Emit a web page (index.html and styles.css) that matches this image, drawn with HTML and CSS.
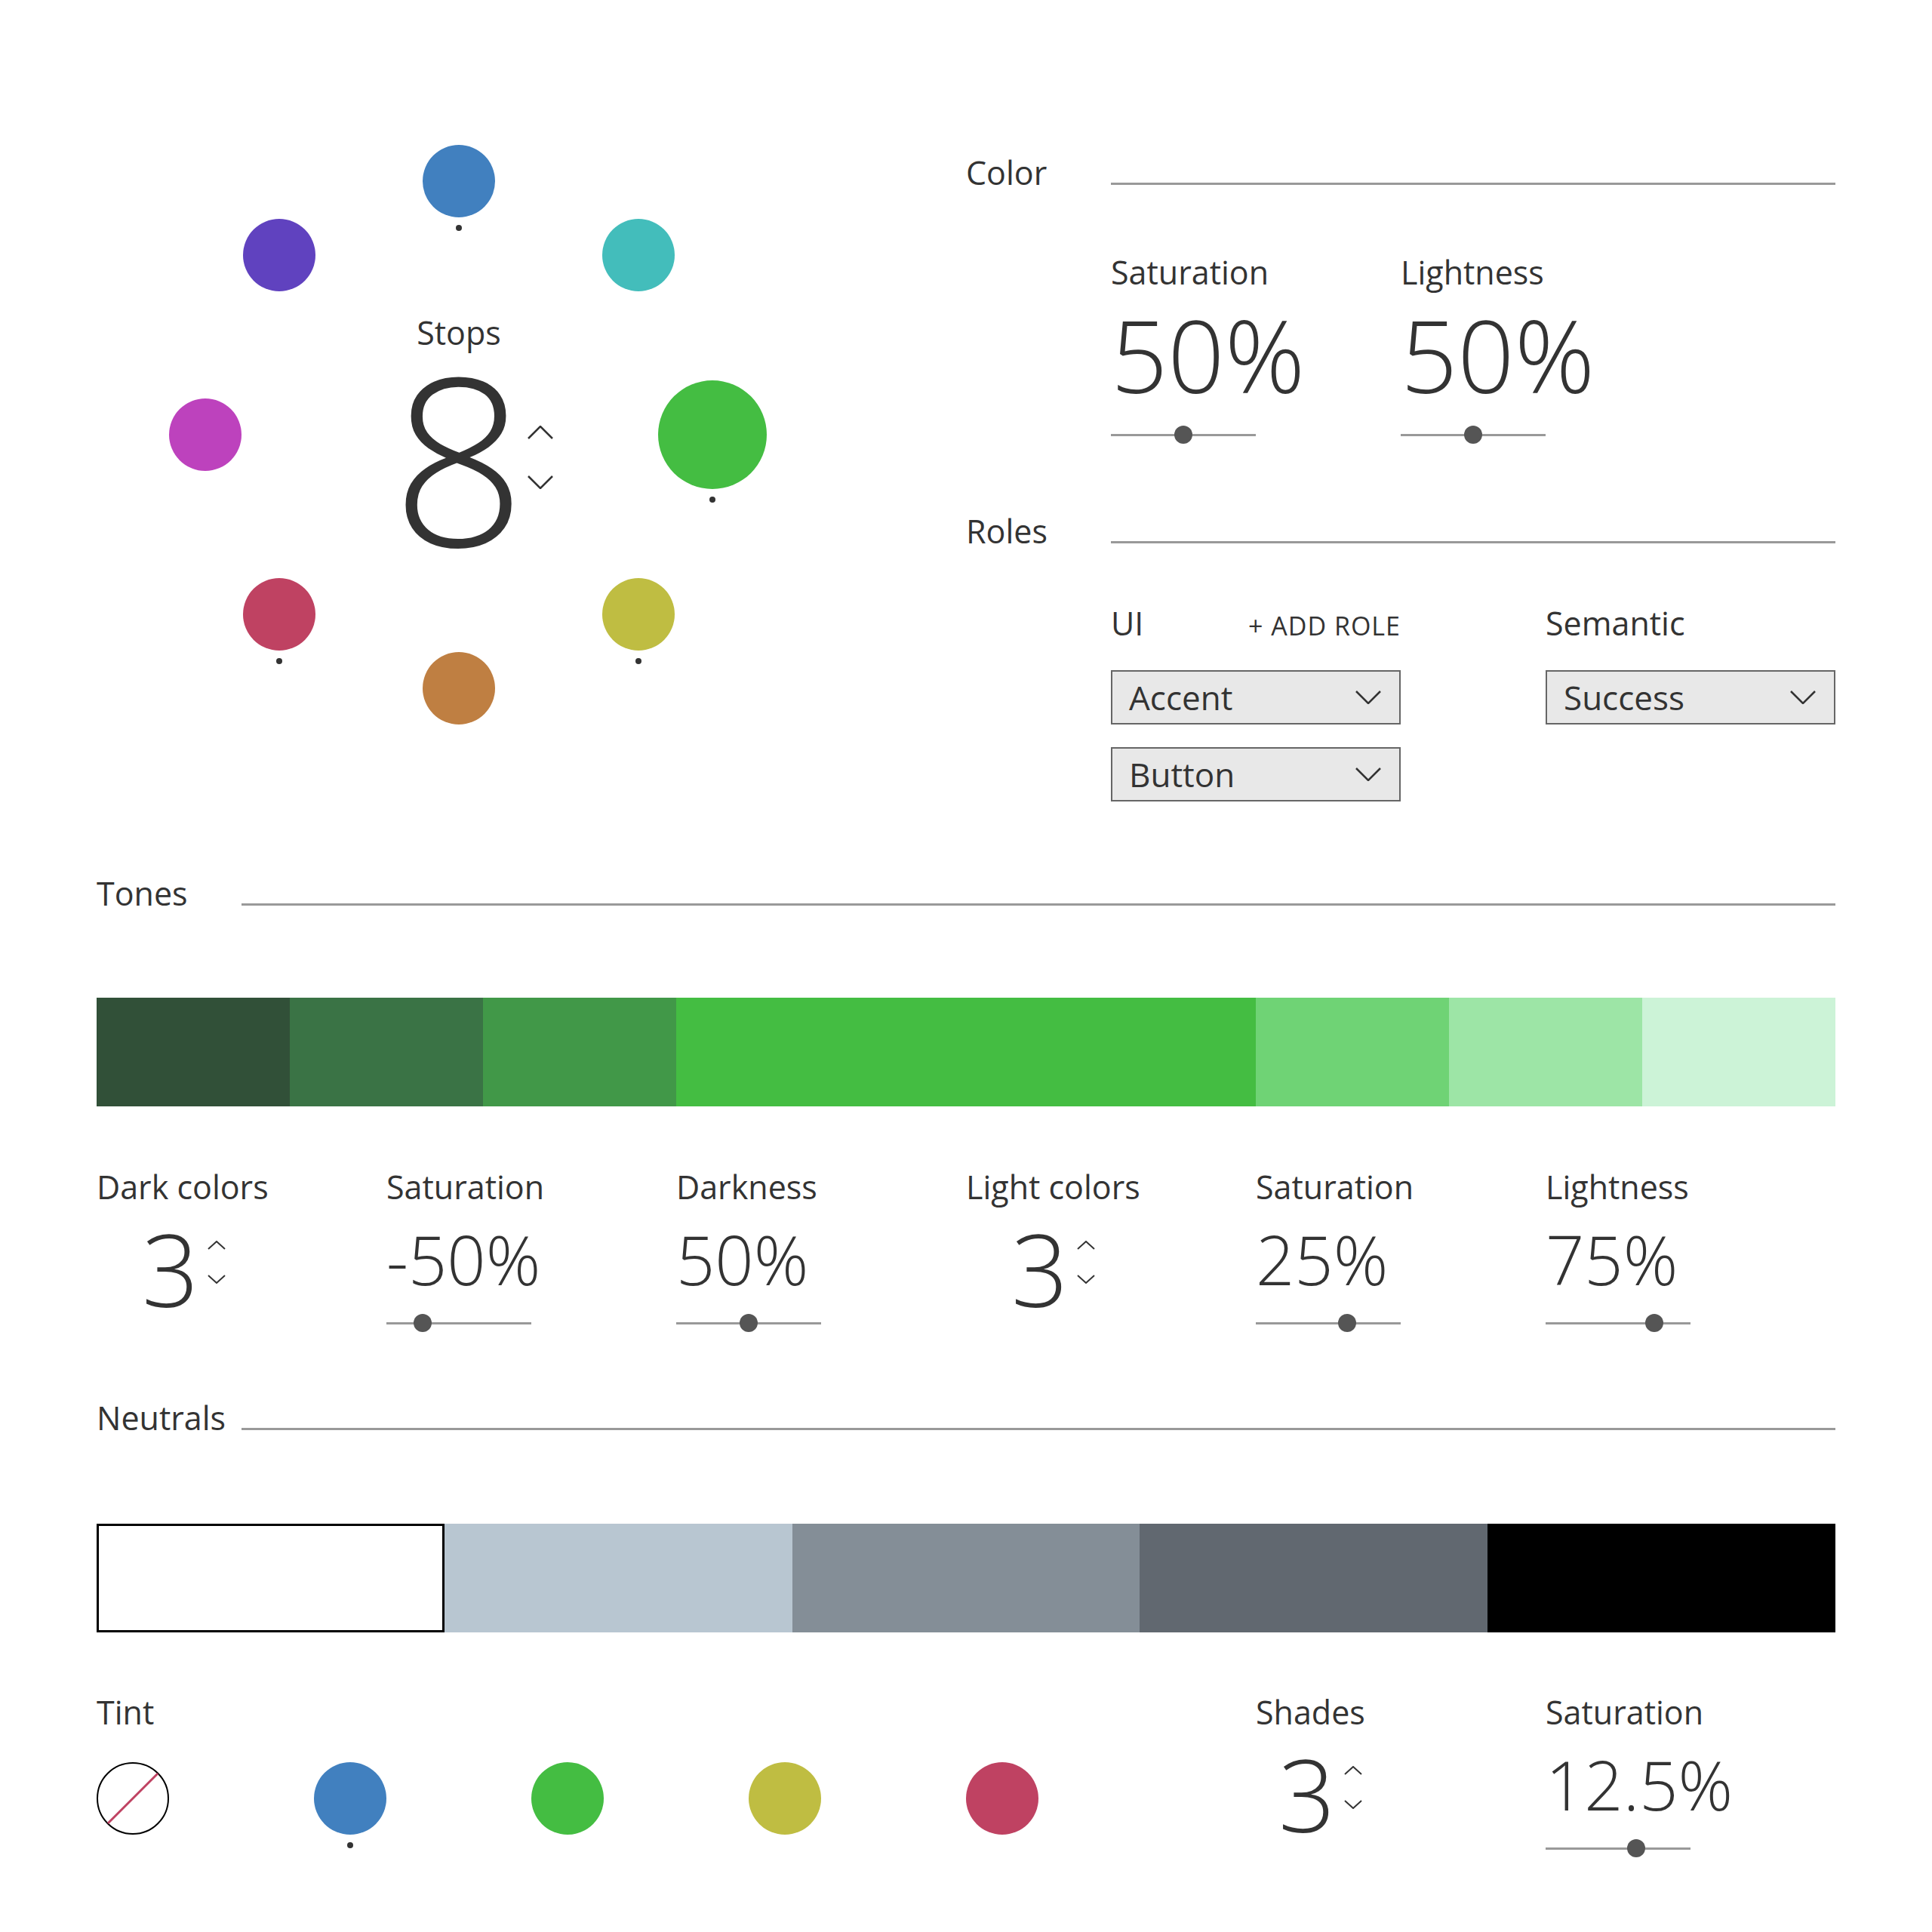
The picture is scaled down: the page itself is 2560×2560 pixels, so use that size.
FILE: index.html
```html
<!DOCTYPE html>
<html lang="en">
<head>
<meta charset="utf-8">
<title>Palette</title>
<link rel="stylesheet" href="styles.css">
</head>
<body>
<main class="page">
  <section class="top">
    <div class="wheel">
      <span class="stop stop-n c-blue marked"></span>
      <span class="stop stop-ne c-teal"></span>
      <span class="stop stop-e c-green marked"></span>
      <span class="stop stop-se c-olive marked"></span>
      <span class="stop stop-s c-orange"></span>
      <span class="stop stop-sw c-red marked"></span>
      <span class="stop stop-w c-magenta"></span>
      <span class="stop stop-nw c-purple"></span>
      <div class="stops">
        <span class="label">Stops</span>
        <span class="stops-num">8
          <span class="stops-chev">
            <svg width="34" height="18" viewBox="0 0 34 18"><polyline points="1,17 17,1 33,17"/></svg>
            <svg width="34" height="18" viewBox="0 0 34 18"><polyline points="1,1 17,17 33,1"/></svg>
          </span>
        </span>
      </div>
    </div>

    <div class="panel">
      <div class="heading panel-heading"><span class="label">Color</span><span class="rule"></span></div>
      <div class="color-body">
        <div class="field">
          <span class="label">Saturation</span>
          <div class="big-value">50%</div>
          <div class="slider" style="--v:50%"></div>
        </div>
        <div class="field">
          <span class="label">Lightness</span>
          <div class="big-value">50%</div>
          <div class="slider" style="--v:50%"></div>
        </div>
      </div>

      <div class="heading roles-heading"><span class="label">Roles</span><span class="rule"></span></div>
      <div class="roles">
        <div class="role-group">
          <div class="role-head"><span class="label">UI</span><span class="add-role">+ ADD ROLE</span></div>
          <div class="select"><span>Accent</span><svg width="34" height="18" viewBox="0 0 34 18"><polyline points="1,1 17,17 33,1"/></svg></div>
          <div class="select"><span>Button</span><svg width="34" height="18" viewBox="0 0 34 18"><polyline points="1,1 17,17 33,1"/></svg></div>
        </div>
        <div class="role-group">
          <div class="role-head"><span class="label">Semantic</span></div>
          <div class="select"><span>Success</span><svg width="34" height="18" viewBox="0 0 34 18"><polyline points="1,1 17,17 33,1"/></svg></div>
        </div>
      </div>
    </div>
  </section>

  <div class="heading tones-heading"><span class="label">Tones</span><span class="rule"></span></div>
  <div class="tone-bar">
    <span class="tone t-d1"></span>
    <span class="tone t-d2"></span>
    <span class="tone t-d3"></span>
    <span class="tone tone-main t-main"></span>
    <span class="tone t-l1"></span>
    <span class="tone t-l2"></span>
    <span class="tone t-l3"></span>
  </div>

  <div class="controls">
    <div class="field">
      <span class="label">Dark colors</span>
      <div class="value-area">
        <div class="stepper">
          <span class="stepper-num">3</span>
          <span class="chev">
            <svg width="24" height="12" viewBox="0 0 24 12"><polyline points="1,11 12,1 23,11"/></svg>
            <svg width="24" height="12" viewBox="0 0 24 12"><polyline points="1,1 12,11 23,1"/></svg>
          </span>
        </div>
      </div>
    </div>
    <div class="field">
      <span class="label">Saturation</span>
      <div class="value-area"><div class="value">-50%</div></div>
      <div class="slider" style="--v:25%"></div>
    </div>
    <div class="field">
      <span class="label">Darkness</span>
      <div class="value-area"><div class="value">50%</div></div>
      <div class="slider" style="--v:50%"></div>
    </div>
    <div class="field">
      <span class="label">Light colors</span>
      <div class="value-area">
        <div class="stepper">
          <span class="stepper-num">3</span>
          <span class="chev">
            <svg width="24" height="12" viewBox="0 0 24 12"><polyline points="1,11 12,1 23,11"/></svg>
            <svg width="24" height="12" viewBox="0 0 24 12"><polyline points="1,1 12,11 23,1"/></svg>
          </span>
        </div>
      </div>
    </div>
    <div class="field">
      <span class="label">Saturation</span>
      <div class="value-area"><div class="value">25%</div></div>
      <div class="slider" style="--v:63%"></div>
    </div>
    <div class="field">
      <span class="label">Lightness</span>
      <div class="value-area"><div class="value">75%</div></div>
      <div class="slider" style="--v:75%"></div>
    </div>
  </div>

  <div class="heading neutrals-heading"><span class="label">Neutrals</span><span class="rule"></span></div>
  <div class="neutral-bar">
    <span class="neutral n-white"></span>
    <span class="neutral n-light"></span>
    <span class="neutral n-mid"></span>
    <span class="neutral n-dark"></span>
    <span class="neutral n-black"></span>
  </div>

  <div class="bottom">
    <div class="field">
      <span class="label">Tint</span>
      <div class="value-area">
        <div class="tints">
          <span class="tint tint-none">
            <svg width="96" height="96" viewBox="0 0 96 96"><circle cx="48" cy="48" r="47"/><line x1="15" y1="81" x2="81" y2="15"/></svg>
          </span>
          <span class="tint c-blue marked"></span>
          <span class="tint c-green"></span>
          <span class="tint c-olive"></span>
          <span class="tint c-red"></span>
        </div>
      </div>
    </div>
    <div class="field">
      <span class="label">Shades</span>
      <div class="value-area">
        <div class="stepper stepper-shades">
          <span class="stepper-num">3</span>
          <span class="chev">
            <svg width="24" height="12" viewBox="0 0 24 12"><polyline points="1,11 12,1 23,11"/></svg>
            <svg width="24" height="12" viewBox="0 0 24 12"><polyline points="1,1 12,11 23,1"/></svg>
          </span>
        </div>
      </div>
    </div>
    <div class="field">
      <span class="label">Saturation</span>
      <div class="value-area"><div class="value">12.5%</div></div>
      <div class="slider" style="--v:62.5%"></div>
    </div>
  </div>
</main>
</body>
</html>
```

FILE: styles.css
```css
* {
  box-sizing: border-box;
  margin: 0;
  padding: 0;
}

html,
body {
  background: #fff;
}

body {
  width: 2560px;
  height: 2560px;
  overflow: hidden;
  font-family: "Open Sans", "Liberation Sans", sans-serif;
  color: #333;
}

.page {
  padding: 0 128px;
}

.label {
  display: block;
  font-size: 43px;
  line-height: 43px;
  font-weight: 400;
  white-space: nowrap;
}

/* section headings with rule */
.heading {
  display: grid;
  grid-template-columns: 192px 1fr;
  align-items: start;
}

.rule {
  height: 3px;
  margin-top: 35px;
  background: #999;
}

/* top area */
.top {
  display: grid;
  grid-template-columns: 1152px 1152px;
  height: 1062px;
}

.wheel {
  position: relative;
  width: 960px;
  height: 960px;
  margin-top: 96px;
  padding-top: 323px;
  display: flex;
  flex-direction: column;
  align-items: center;
}

.stop {
  position: absolute;
  width: 96px;
  height: 96px;
  border-radius: 50%;
}

.stop-n { left: 432px; top: 96px; }
.stop-ne { left: 670px; top: 194px; }
.stop-e { left: 744px; top: 408px; width: 144px; height: 144px; }
.stop-se { left: 670px; top: 670px; }
.stop-s { left: 432px; top: 768px; }
.stop-sw { left: 194px; top: 670px; }
.stop-w { left: 96px; top: 432px; }
.stop-nw { left: 194px; top: 194px; }

.marked::after {
  content: "";
  position: absolute;
  left: 50%;
  top: calc(100% + 10px);
  width: 8px;
  height: 8px;
  margin-left: -4px;
  border-radius: 50%;
  background: #333;
}

.c-blue { background: #4180bf; }
.c-teal { background: #43bdbb; }
.c-green { background: #44bd42; }
.c-olive { background: #bfbd42; }
.c-orange { background: #bf7f42; }
.c-red { background: #bf4262; }
.c-magenta { background: #bd42bd; }
.c-purple { background: #6042bf; }

.stops {
  display: flex;
  flex-direction: column;
  align-items: center;
}

.stops-num {
  position: relative;
  display: block;
  margin-top: 22px;
  font-size: 310px;
  line-height: 240px;
  font-weight: 300;
}

.stops-chev {
  position: absolute;
  left: calc(100% + 3px);
  top: 80px;
  display: flex;
  flex-direction: column;
  gap: 48px;
}

svg polyline,
svg line {
  fill: none;
  stroke: #333;
  stroke-width: 2.5;
}

/* right panel */
.panel-heading {
  margin-top: 207px;
}

.color-body {
  display: grid;
  grid-template-columns: 384px 384px;
  margin: 89px 0 0 192px;
}

.big-value {
  margin-top: 22px;
  font-size: 132px;
  line-height: 132px;
  font-weight: 300;
  white-space: nowrap;
}

.color-body .slider {
  margin-top: 28px;
}

.slider {
  position: relative;
  width: 192px;
  height: 24px;
}

.slider::before {
  content: "";
  position: absolute;
  left: 0;
  right: 0;
  top: 10.5px;
  height: 3px;
  background: #999;
}

.slider::after {
  content: "";
  position: absolute;
  top: 0;
  left: calc(var(--v) - 12px);
  width: 24px;
  height: 24px;
  border-radius: 50%;
  background: #555;
}

.roles-heading {
  margin-top: 94px;
}

.roles {
  display: grid;
  grid-template-columns: 384px 384px;
  column-gap: 192px;
  margin: 79px 0 0 192px;
}

.role-head {
  display: flex;
  justify-content: space-between;
  align-items: baseline;
  height: 43px;
}

.add-role {
  font-size: 34px;
  letter-spacing: 1px;
  white-space: nowrap;
}

.select {
  display: flex;
  align-items: center;
  justify-content: space-between;
  height: 72px;
  margin-top: 41px;
  padding: 0 24px 0 22px;
  border: 2px solid #666;
  background: #e8e8e8;
  font-size: 44px;
  line-height: 50px;
}

.select + .select {
  margin-top: 30px;
}

/* tones */
.tones-heading {
  margin-top: 100px;
}

.tone-bar {
  display: flex;
  height: 144px;
  margin-top: 117px;
}

.tone {
  width: 256px;
}

.tone-main {
  width: 768px;
}

.t-d1 { background: #315038; }
.t-d2 { background: #3a7345; }
.t-d3 { background: #419848; }
.t-main { background: #44bd42; }
.t-l1 { background: #6fd375; }
.t-l2 { background: #9de5a6; }
.t-l3 { background: #ccf3d7; }

.controls {
  display: grid;
  grid-template-columns: repeat(6, 384px);
  margin-top: 85px;
}

.value-area {
  display: flow-root;
  height: 118px;
  margin-top: 29px;
}

.value {
  font-size: 90px;
  line-height: 90px;
  font-weight: 300;
  white-space: nowrap;
}

.stepper {
  display: flex;
  align-items: flex-start;
  margin-top: -8px;
  padding-left: 60px;
}

.stepper-shades {
  padding-left: 30px;
}

.stepper-num {
  font-size: 132px;
  line-height: 132px;
  font-weight: 300;
}

.chev {
  display: flex;
  flex-direction: column;
  gap: 33px;
  margin-top: 29px;
  margin-left: 12px;
}

.chev svg polyline {
  stroke-width: 2;
}

/* neutrals */
.neutrals-heading {
  margin-top: 92px;
}

.neutral-bar {
  display: grid;
  grid-template-columns: repeat(5, 1fr);
  height: 144px;
  margin-top: 119px;
}

.n-white { background: #fff; border: 3px solid #000; }
.n-light { background: #b8c6d1; }
.n-mid { background: #848e97; }
.n-dark { background: #616870; }
.n-black { background: #000; }

/* bottom row */
.bottom {
  display: grid;
  grid-template-columns: 1536px 384px 384px;
  margin-top: 84px;
}

.tints {
  display: flex;
  gap: 192px;
  margin-top: 16px;
}

.tint {
  position: relative;
  width: 96px;
  height: 96px;
  border-radius: 50%;
}

.tint-none svg {
  display: block;
}

.tint-none circle {
  fill: #fff;
  stroke: #000;
  stroke-width: 2;
}

.tint-none line {
  stroke: #bf4262;
  stroke-width: 3;
}
```
